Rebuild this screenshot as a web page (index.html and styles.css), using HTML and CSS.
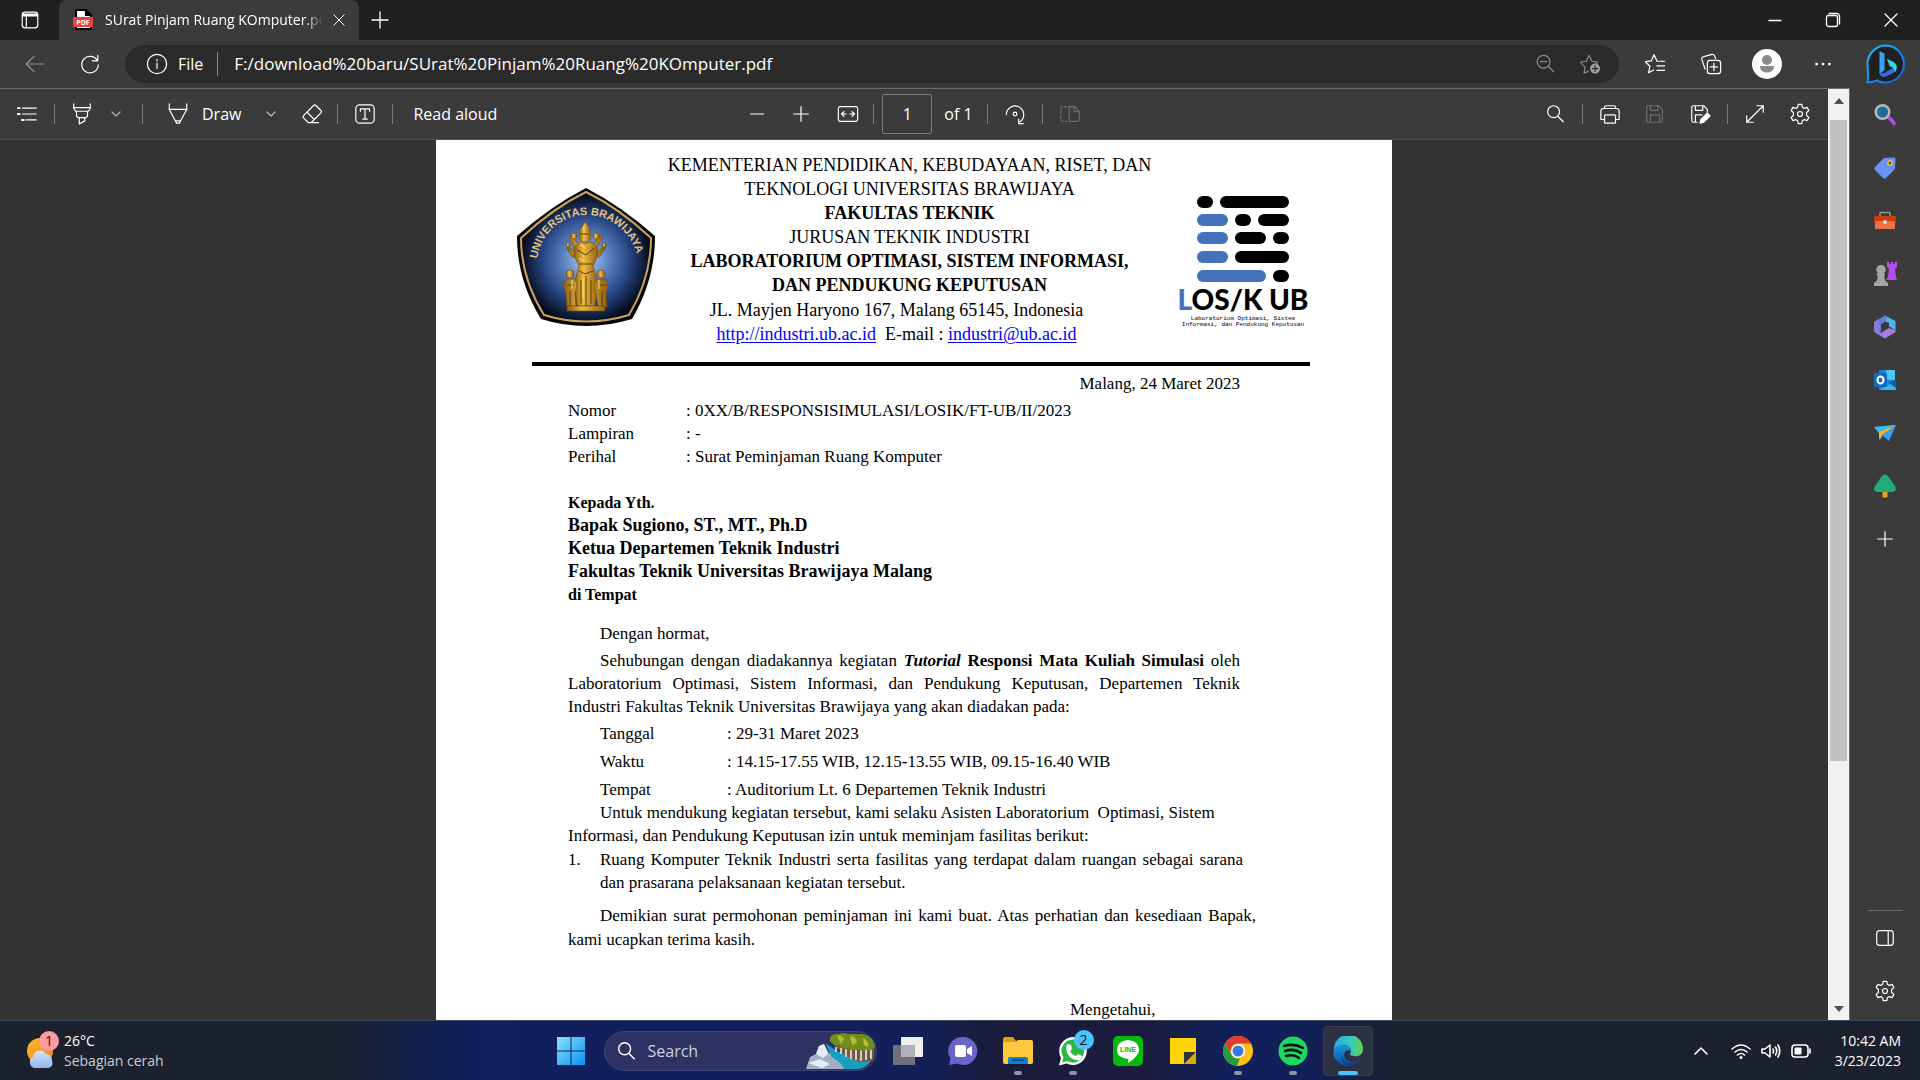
FILE: index.html
```html
<!DOCTYPE html>
<html lang="en">
<head>
<meta charset="utf-8">
<title>SUrat Pinjam Ruang KOmputer.pdf</title>
<link rel="stylesheet" href="styles.css">
</head>
<body>
<svg class="defs" aria-hidden="true">
  <symbol id="gear" viewBox="0 0 24 24"><path d="M10 1.500h4l.6 3.200 2 1.200 3.100-1.100 2 3.500-2.500 2.100v3.200l2.500 2.100-2 3.500-3.100-1.100-2 1.200-.6 3.200h-4l-.6-3.200-2-1.200-3.100 1.100-2-3.500 2.500-2.100v-3.200L2.300 8.300l2-3.500 3.100 1.100 2-1.200z"/><circle cx="12" cy="12" r="2.700"/></symbol>
  <symbol id="lens" viewBox="0 0 24 24"><circle cx="10.500" cy="9.500" r="6.500"/><path d="M15 14.500l6 6"/></symbol>
  <symbol id="chev" viewBox="0 0 12 12"><path d="M2 4l4 4 4-4"/></symbol>
  <symbol id="plus" viewBox="0 0 24 24"><path d="M12 4v16M4 12h16"/></symbol>
  <symbol id="cross" viewBox="0 0 24 24"><path d="M5 5l14 14M19 5L5 19"/></symbol>
  <symbol id="disk" viewBox="0 0 24 24"><path d="M4 3h12l4 4v12a2 2 0 0 1-2 2H5a2 2 0 0 1-2-2V5a2 2 0 0 1 1-2zM7 3v5h8V3M7 21v-8h10v8"/></symbol>
</svg>

<header class="tabs">
  <button class="tab-menu" aria-label="Tab actions"><svg class="icon" viewBox="0 0 24 24"><rect x="3.500" y="3.500" width="17" height="17" rx="3"/><path d="M4 5.500h16v2H4z" fill="#fff"/><path d="M8 8v12"/></svg></button>
  <div class="tab">
    <svg class="pdf" viewBox="0 0 20 22"><path d="M3 1h10l5 5v14H3z" fill="#fff" stroke="#000" stroke-width="2"/><path d="M12 0l7 7h-7z" fill="#000"/><rect x="0" y="8" width="20" height="10" rx="1" fill="#f0403c"/><text x="10" y="16" text-anchor="middle">PDF</text></svg>
    <span class="tab-title">SUrat Pinjam Ruang KOmputer.pdf</span>
    <button class="tab-close" aria-label="Close tab"><svg class="icon s18"><use href="#cross"/></svg></button>
  </div>
  <button class="new-tab" aria-label="New tab"><svg class="icon s24"><use href="#plus"/></svg></button>
  <div class="window-buttons">
    <button aria-label="Minimize"><svg class="icon s16" viewBox="0 0 16 16"><path d="M2 8.500h12"/></svg></button>
    <button aria-label="Restore"><svg class="icon s16" viewBox="0 0 16 16"><rect x="1.500" y="3.500" width="11" height="11" rx="2"/><path d="M4 1.500h8a3 3 0 0 1 2.500 2.500v8"/></svg></button>
    <button aria-label="Close"><svg class="icon s16" viewBox="0 0 16 16"><path d="M2 2l12 12M14 2L2 14"/></svg></button>
  </div>
</header>

<nav class="address-row">
  <button class="nav-button dim" aria-label="Back"><svg class="icon" viewBox="0 0 24 24"><path d="M22 12H2.500M11 3.500L2.500 12l8.500 8.500"/></svg></button>
  <button class="nav-button" aria-label="Refresh"><svg class="icon" viewBox="0 0 24 24"><path d="M20 8.500A9 9 0 1 0 21 13M20.500 2.500v6h-6"/></svg></button>
  <div class="address">
    <svg class="icon" viewBox="0 0 24 24"><circle cx="12" cy="12" r="10.500"/><path d="M12 11v6M12 7v1.500"/></svg>
    <label class="scheme" for="url">File</label>
    <input id="url" class="url" type="text" value="F:/download%20baru/SUrat%20Pinjam%20Ruang%20KOmputer.pdf">
    <button class="in-address dim" aria-label="Zoom"><svg class="icon" viewBox="0 0 24 24"><circle cx="10.500" cy="9.500" r="7"/><path d="M15.500 14.500l6 6M7 9.500h7"/></svg></button>
    <button class="in-address dim" aria-label="Add to favorites"><svg class="icon" viewBox="0 0 24 24"><path d="M10 20l-4.500 2 1-6.500L1.500 10l6.500-1L11 2.500 14 9l6.500 1-2 2"/><circle cx="17.500" cy="17" r="5.500" fill="#9c9c9c" stroke="none"/><path d="M17.500 14v6M14.500 17h6" stroke="#2b2b2b"/></svg></button>
  </div>
  <button class="side-button" aria-label="Favorites"><svg class="icon" viewBox="0 0 24 24"><path d="M14 8.500L11 2 8 8.500 1.500 9.500 6.500 14.500 5 21.500 10.500 18.500M14 9h8.500M14 14h8.500M14 19h8.500"/></svg></button>
  <button class="side-button" aria-label="Collections"><svg class="icon" viewBox="0 0 24 24"><rect x="8" y="8" width="14.500" height="14.500" rx="3"/><path d="M15.200 11v8M11 15.200h8M5.500 17.500L2 7a2.500 2.500 0 0 1 2-3l9-2.500a2.500 2.500 0 0 1 3 2L17 6"/></svg></button>
  <button class="side-button" aria-label="Profile"><svg class="avatar" viewBox="0 0 30 30"><circle cx="15" cy="15" r="15" fill="#fff"/><circle cx="15" cy="11" r="5" fill="#8a8a8a"/><path d="M8 17h14v1a7 5.500 0 0 1-14 0z" fill="#8a8a8a"/></svg></button>
  <button class="side-button" aria-label="Settings and more"><svg class="icon" viewBox="0 0 24 24"><g fill="#fff" stroke="none"><circle cx="5" cy="12" r="1.500"/><circle cx="12" cy="12" r="1.500"/><circle cx="19" cy="12" r="1.500"/></g></svg></button>
  <button class="bing" aria-label="Discover"><svg viewBox="0 0 40 40"><defs><linearGradient id="bg1" x2="1" y2="1"><stop stop-color="#19c5f0"/><stop offset="1" stop-color="#1b52e6"/></linearGradient></defs><path d="M20 1.500A18.500 18.500 0 1 1 11 36.500Q6 38.500 1.500 38.500 2.500 33 1.500 20A18.500 18.500 0 0 1 20 1.500z" fill="#202020" stroke="url(#bg1)" stroke-width="2"/><path d="M13.500 7l5 2.500V26L13.500 30z" fill="#3b9ff5"/><path d="M13.500 26q1 4 5 3l5-3 7-3.500q0 4-3.500 6.500L20 32.500q-5 1.500-6.500-3z" fill="#2f6df0"/><path d="M21 15l6 2.500q5 3 3.500 8-.5 2-2 3 1-4-5-6.500z" fill="#2cd8dd"/></svg></button>
</nav>

<main class="workspace">
  <section class="reader">
    <div class="reader-main">
      <div class="tools">
        <div class="tool-group">
          <button class="tool w54" aria-label="Contents"><svg class="icon" viewBox="0 0 24 24"><path d="M7 5.500h15M7 12h15M11 18.500h11"/><path d="M2 5.500h2M2 12h2M6.500 18.500h2" stroke-width="2"/></svg></button>
          <span class="sep"></span>
          <button class="tool highlight" aria-label="Highlight"><svg class="icon" viewBox="0 0 24 24"><path d="M3 1v5l2 3h14l2-3V1M3 5h18M6 9v5.500l2 1.500h8l2-1.500V9M9 16v7l6-3.500V16"/></svg></button>
          <button class="tool w32" aria-label="Highlight colors"><svg class="icon s12"><use href="#chev"/></svg></button>
          <span class="sep after-menu"></span>
          <button class="tool draw"><svg class="icon" viewBox="0 0 24 24"><path d="M2.500 1v6L10.500 22h3L21.500 7V1M2.500 7h19M9.500 19.500h5"/></svg>Draw</button>
          <button class="tool w32" aria-label="Draw options"><svg class="icon s12"><use href="#chev"/></svg></button>
          <button class="tool w50" aria-label="Erase"><svg class="icon" viewBox="0 0 24 24"><path d="M14 2.500a1.500 1.500 0 0 1 2 0l6 6a1.500 1.500 0 0 1 0 2L11 21.500H8L2.500 16a1.500 1.500 0 0 1 0-2zM6.500 10l8 8M11 21.500h8"/></svg></button>
          <span class="sep"></span>
          <button class="tool w54" aria-label="Add text"><svg class="icon" viewBox="0 0 24 24"><rect x="2" y="2" width="20" height="20" rx="4"/><path d="M7 9V6.500h10V9M12 6.500v11M9.500 17.500h5"/></svg></button>
          <span class="sep"></span>
          <button class="tool read">Read aloud</button>
        </div>
        <div class="tool-group center">
          <button class="tool w44" aria-label="Zoom out"><svg class="icon" viewBox="0 0 24 24"><path d="M5 12h14"/></svg></button>
          <button class="tool w44" aria-label="Zoom in"><svg class="icon"><use href="#plus"/></svg></button>
          <button class="tool w50" aria-label="Fit to width"><svg class="icon" viewBox="0 0 24 24"><rect x="1.500" y="4" width="21" height="16" rx="2"/><path d="M10 12H5M7.500 9.500L5 12l2.500 2.500M14 12h5M16.500 9.500L19 12l-2.500 2.500"/></svg></button>
          <span class="sep"></span>
          <input id="page" class="page-number" type="text" value="1">
          <label class="of" for="page">of 1</label>
          <span class="sep"></span>
          <button class="tool w54" aria-label="Rotate"><svg class="icon" viewBox="0 0 24 24"><circle cx="12" cy="12" r="2"/><path d="M2.500 12.500a9.500 9.500 0 1 1 15 8M21 22.500h-5v-5"/></svg></button>
          <span class="sep"></span>
          <button class="tool w54 faint" aria-label="Page view"><svg class="icon" viewBox="0 0 24 24"><path d="M11 4h6l5 5v9a2 2 0 0 1-2 2h-9zM16.500 4v5.500H22"/><path d="M8.500 4H4a2 2 0 0 0-2 2v12a2 2 0 0 0 2 2h4.500" stroke-dasharray="3 2"/></svg></button>
        </div>
        <div class="tool-group end">
          <button class="tool w54" aria-label="Find"><svg class="icon"><use href="#lens"/></svg></button>
          <span class="sep"></span>
          <button class="tool w54" aria-label="Print"><svg class="icon" viewBox="0 0 24 24"><path d="M6 6V4.500A1.500 1.500 0 0 1 7.500 3h9A1.500 1.500 0 0 1 18 4.500V6M6 18H2V9a3 3 0 0 1 3-3h14a3 3 0 0 1 3 3v9h-4"/><rect x="6" y="13" width="12" height="9" rx="1"/></svg></button>
          <button class="tool w36 faint" aria-label="Save"><svg class="icon"><use href="#disk"/></svg></button>
          <button class="tool w54" aria-label="Save as"><svg class="icon" viewBox="0 0 24 24"><path d="M9 21H5a2 2 0 0 1-2-2V5a2 2 0 0 1 2-2h11l4 4v3M7 3v5h8V3M7 21v-8h7"/><path d="M12 22l1-4 7-7 3 3-7 7z" fill="#fff"/></svg></button>
          <span class="sep"></span>
          <button class="tool w54" aria-label="Full screen"><svg class="icon" viewBox="0 0 24 24"><path d="M3 21L21 3M14 3h7v7M3 14v7h7"/></svg></button>
          <button class="tool w36" aria-label="Settings"><svg class="icon"><use href="#gear"/></svg></button>
        </div>
      </div>

      <div class="viewer">
        <article class="paper">
          <header class="letterhead">
            <svg class="seal" viewBox="0 0 138 138" role="img" aria-label="Universitas Brawijaya">
              <defs>
                <radialGradient id="sealBlue" cx=".5" cy=".52" r=".5"><stop stop-color="#b4cdf0"/><stop offset=".35" stop-color="#5b82c4"/><stop offset=".7" stop-color="#23407c"/><stop offset="1" stop-color="#050a18"/></radialGradient>
                <linearGradient id="gold" x2="1"><stop stop-color="#8a5e0e"/><stop offset=".4" stop-color="#eebc40"/><stop offset="1" stop-color="#8f5f10"/></linearGradient>
                <path id="arc" d="M20 71C30 12 108 12 122 73"/>
              </defs>
              <path d="M69 0Q104 18 138 48 138 92 115 131 69 145 24 131 0 92 0 48 34 18 69 0z" fill="#050505"/>
              <path d="M69 4Q102 20 134 50 134 90 112 127 69 140 27 127 4 90 4 50 36 20 69 4z" fill="url(#sealBlue)" stroke="#c9a35c" stroke-width="2"/>
              <text class="seal-text"><textPath href="#arc">UNIVERSITAS BRAWIJAYA</textPath></text>
              <g fill="url(#gold)" stroke="#6e480b" stroke-width=".6">
                <path d="M68 34l3 4 2 2-1 3 2 3-1 5-2 3h-6l-3-4 1-4-1-3 3-4z"/>
                <path d="M57 56q4-3 8-2l3 2 4-2q6 0 8 4l1 7-3 9-2 4 3 10 1 15-2 15H60l-2-15 1-14 3-11-5-10z"/>
                <path d="M57 59l-5-10 2-2 7 9zM80 59l6-10-2-2-7 9zM56 70l-6-9v-4l8 7zM81 70l7-9v-4l-8 7z"/>
                <circle cx="57" cy="48" r="3"/><circle cx="79" cy="48" r="3"/><circle cx="51" cy="57" r="2"/><circle cx="87" cy="57" r="2"/>
                <circle cx="53" cy="86" r="4"/><circle cx="84" cy="86" r="4"/>
                <path d="M49 91h9l2 7-2 7 1 14h-9l-1-14-3-7zM80 91h9l2 7-2 7 1 14h-9l-2-14-2-7z"/>
                <path d="M50 118h38v5H50z"/>
              </g>
              <g stroke="#5f3d08" fill="none"><path d="M60 62l9 5 8-7M62 76h15M62 83l6 3 8-3M69 88v30M64 92v24M74 92v24M63 46h9M50 97h7M82 97h7M53 103v15M85 103v15"/></g>
              <g stroke="#ffe083" fill="none"><path d="M67 38v5M63 57l5 3M62 70l5 3M66 90v20M55 92v9M82 92v9"/></g>
            </svg>
            <div class="heading">
              <p>KEMENTERIAN PENDIDIKAN, KEBUDAYAAN, RISET, DAN</p>
              <p>TEKNOLOGI UNIVERSITAS BRAWIJAYA</p>
              <p><b>FAKULTAS TEKNIK</b></p>
              <p>JURUSAN TEKNIK INDUSTRI</p>
              <p><b>LABORATORIUM OPTIMASI, SISTEM INFORMASI,</b></p>
              <p><b>DAN PENDUKUNG KEPUTUSAN</b></p>
              <div class="contact">
                <p>JL. Mayjen Haryono 167, Malang 65145, Indonesia</p>
                <p><a href="http://industri.ub.ac.id">http://industri.ub.ac.id</a>&nbsp; E-mail : <a href="mailto:industri@ub.ac.id">industri@ub.ac.id</a></p>
              </div>
            </div>
            <svg class="lab" viewBox="0 0 132 132" role="img" aria-label="LOSIK UB">
              <g fill="#000"><rect x="19" y="0" width="16" height="12" rx="6"/><rect x="42" y="0" width="69" height="12" rx="6"/><rect x="57" y="18" width="16" height="12" rx="6"/><rect x="80" y="18" width="31" height="12" rx="6"/><rect x="57" y="36" width="31" height="12" rx="6"/><rect x="95" y="36" width="16" height="12" rx="6"/><rect x="57" y="55" width="54" height="12" rx="6"/><rect x="95" y="74" width="16" height="12" rx="6"/></g>
              <g fill="#4472b8"><rect x="19" y="18" width="31" height="12" rx="6"/><rect x="19" y="36" width="31" height="12" rx="6"/><rect x="19" y="55" width="31" height="12" rx="6"/><rect x="19" y="74" width="69" height="12" rx="6"/></g>
              <text class="lab-name" x="65" y="114" text-anchor="middle"><tspan fill="#4472b8">L</tspan>OS/K UB</text>
              <text class="lab-sub" x="65" y="124" text-anchor="middle">Laboratorium Optimasi, Sistem</text>
              <text class="lab-sub" x="65" y="130" text-anchor="middle">Informasi, dan Pendukung Keputusan</text>
            </svg>
          </header>
          <div class="letter">
            <p class="date">Malang, 24 Maret 2023</p>
            <dl class="meta">
              <dt>Nomor</dt><dd>: 0XX/B/RESPONSISIMULASI/LOSIK/FT-UB/II/2023</dd>
              <dt>Lampiran</dt><dd>: -</dd>
              <dt>Perihal</dt><dd>: Surat Peminjaman Ruang Komputer</dd>
            </dl>
            <address class="recipient">
              <span class="small">Kepada Yth.</span>
              <span>Bapak Sugiono, ST., MT., Ph.D</span>
              <span>Ketua Departemen Teknik Industri</span>
              <span>Fakultas Teknik Universitas Brawijaya Malang</span>
              <span class="small">di Tempat</span>
            </address>
            <p class="indent greeting">Dengan hormat,</p>
            <p class="indent justified">Sehubungan dengan diadakannya kegiatan <b><i>Tutorial</i> Responsi Mata Kuliah Simulasi</b> oleh Laboratorium Optimasi, Sistem Informasi, dan Pendukung Keputusan, Departemen Teknik Industri Fakultas Teknik Universitas Brawijaya yang akan diadakan pada:</p>
            <dl class="schedule">
              <dt>Tanggal</dt><dd>: 29-31 Maret 2023</dd>
              <dt>Waktu</dt><dd>: 14.15-17.55 WIB, 12.15-13.55 WIB, 09.15-16.40 WIB</dd>
              <dt>Tempat</dt><dd>: Auditorium Lt. 6 Departemen Teknik Industri</dd>
            </dl>
            <p class="indent">Untuk mendukung kegiatan tersebut, kami selaku Asisten Laboratorium &nbsp;Optimasi, Sistem<br>Informasi, dan Pendukung Keputusan izin untuk meminjam fasilitas berikut:</p>
            <ol class="items"><li>Ruang Komputer Teknik Industri serta fasilitas yang terdapat dalam ruangan sebagai sarana dan prasarana pelaksanaan kegiatan tersebut.</li></ol>
            <p class="indent closing">Demikian surat permohonan peminjaman ini kami buat. Atas perhatian dan kesediaan Bapak, kami ucapkan terima kasih.</p>
            <p class="signature">Mengetahui,</p>
          </div>
        </article>
      </div>
    </div>
    <div class="scrollbar">
      <button class="scroll-arrow" aria-label="Scroll up"><svg viewBox="0 0 10 6"><path d="M0 6l5-6 5 6z" fill="#505050"/></svg></button>
      <div class="track"><div class="thumb"></div></div>
      <button class="scroll-arrow" aria-label="Scroll down"><svg viewBox="0 0 10 6"><path d="M0 0h10L5 6z" fill="#505050"/></svg></button>
    </div>
  </section>

  <aside class="sidebar">
    <button aria-label="Search"><svg class="app" viewBox="0 0 24 24"><path d="M14 15l3-2 5.500 6q1 3-2 3.500z" fill="#b944f2"/><circle cx="9.500" cy="9" r="6.800" fill="#1f6d96" stroke="#b9b9b9" stroke-width="2.500"/></svg></button>
    <button aria-label="Shopping"><svg class="app" viewBox="0 0 24 24"><path d="M12 2l9-.5q1.500 0 1.500 1.500L22 12q0 1-1 2l-8 8q-1.500 1.500-3 0l-8-8q-1.500-1.500 0-3l8-8q1-1 2-1z" fill="#6a92f8"/><circle cx="17" cy="7" r="2" fill="#333" stroke="#f2c311" stroke-width="1.500"/></svg></button>
    <button aria-label="Tools"><svg class="app" viewBox="0 0 24 24"><path d="M7 7V4.500Q7 3.500 8 3.500h8q1 0 1 1V7" fill="none" stroke="#999" stroke-width="1.500"/><rect x="1" y="7" width="22" height="7" rx="1" fill="#cf3c0c"/><rect x="2" y="12" width="20" height="8" rx="1" fill="#ee7047"/><circle cx="12" cy="13" r="2" fill="#ddd"/></svg></button>
    <button aria-label="Games"><svg class="app" viewBox="0 0 24 24"><path d="M14 0h2.500v2H18V0h2v2h1.500V0H24v5l-2 2 1 8 1 3H13l2-3 1-8-2-2z" fill="#b64bf2"/><path d="M8 3a4.500 4.500 0 0 1 3 8l1 1v1.500h-1l1 5 3 2.500v3H1v-3l3-2.500 1-5H3.500V12L5 11a4.500 4.500 0 0 1 3-8z" fill="#a5a5a5"/></svg></button>
    <button aria-label="Microsoft 365"><svg class="app" viewBox="0 0 24 24"><path d="M12 .5L22.500 6v9L16 11.500V8l-4-1.500z" fill="#4bb5ed"/><path d="M12 .5Q15 1 13 6L8 9v7l-4 3-3-3V7z" fill="#5f7ee0"/><path d="M1 7l5-3v11l2 3-3 1.500-4-3z" fill="#8b7bdb"/><path d="M7 18.500L16 13l6.500 2v2L12 23.500 5 19.500z" fill="#a97be0"/></svg></button>
    <button aria-label="Outlook"><svg class="app" viewBox="0 0 24 24"><path d="M6 2h16v20H6z" fill="#1683d0"/><path d="M13 2h9v10h-9z" fill="#4bc5f7"/><path d="M6 22l17-9v9z" fill="#35b8f1"/><path d="M16 15l7-4v9z" fill="#0b62a8"/><rect x="1" y="5" width="13" height="14" rx="1.500" fill="#0f6cbd"/><ellipse cx="7.500" cy="12" rx="3" ry="3.500" fill="none" stroke="#fff" stroke-width="2"/></svg></button>
    <button aria-label="Drop"><svg class="app" viewBox="0 0 24 24"><path d="M1 6l22-2-7 16-6-5-3 4-1-7z" fill="#3d9af5"/><path d="M1 6l22-2L6 12z" fill="#37bdec"/><path d="M23 4L6 11v8l3-5z" fill="#f4b41b"/></svg></button>
    <button aria-label="Browser essentials"><svg class="app" viewBox="0 0 24 24"><rect x="9.500" y="17" width="5" height="6.500" rx="1" fill="#eea320"/><path d="M9 2q3-3 6 0l7 10q3 6-4 6H6q-7 0-4-6z" fill="#22ad76"/></svg></button>
    <button aria-label="Customize"><svg class="icon"><use href="#plus"/></svg></button>
    <div class="side-bottom">
      <button aria-label="Hide sidebar"><svg class="icon" viewBox="0 0 24 24"><rect x="3" y="4" width="18" height="16" rx="3"/><path d="M15.500 4v16"/></svg></button>
      <button aria-label="Settings"><svg class="icon"><use href="#gear"/></svg></button>
    </div>
  </aside>
</main>

<footer class="taskbar">
  <button class="weather">
    <svg class="weather-icon" viewBox="0 0 36 40"><defs><linearGradient id="sun" x2="1" y2="1"><stop stop-color="#fbb928"/><stop offset="1" stop-color="#f08316"/></linearGradient><linearGradient id="cl" y2="1" x2="0"><stop stop-color="#d5e6fb"/><stop offset="1" stop-color="#93b4ea"/></linearGradient></defs><circle cx="14" cy="20" r="13" fill="url(#sun)"/><path d="M8 37a6 6 0 0 1-1-11 7 7 0 0 1 13-3 6 6 0 0 1 6 6q2 8-5 8z" fill="url(#cl)"/><circle cx="23" cy="10" r="10" fill="#ff99a4"/><text x="23" y="15" text-anchor="middle">1</text></svg>
    <span><span class="temp">26°C</span><br>Sebagian cerah</span>
  </button>
  <div class="dock">
    <button class="dock-item" aria-label="Start"><svg class="app30" viewBox="0 0 30 30"><defs><linearGradient id="win" x2="1" y2="1"><stop stop-color="#8be1fb"/><stop offset="1" stop-color="#0693f2"/></linearGradient></defs><path d="M1 1h13.500v13.500H1zM15.500 1H29v13.500H15.500zM1 15.500h13.500V29H1zM15.500 15.500H29V29H15.500z" fill="url(#win)"/></svg></button>
    <label class="search">
      <svg class="icon bold"><use href="#lens"/></svg>
      <input type="text" placeholder="Search" aria-label="Search">
      <svg class="scene" viewBox="0 0 70 36"><path d="M0 36l4-12 6-3 3-8 5-2 5 9 10 2 12 14z" fill="#9fb0c6"/><path d="M10 21l3-8 5-2 4 10-5 4zM2 30l12-4 10 5-8 4z" fill="#e4edf5"/><path d="M19 10q6 4 12 8l18 8 18-1q-5 9-14 11H38q-2-6-12-12z" fill="#16a0bb"/><path d="M26 10l16 4 27-2-2 16-14 1-15-7z" fill="#765a41"/><path d="M30 14v5M35 15v6M40 16v8M45 17v9M50 17v10M55 17v11M60 15v12M65 12v14" stroke="#eef6f7" stroke-width="1.500"/><path d="M24 8Q23 0 33 1q5-2 9 0h14q12 2 13 12-3 6-8 3-4 4-9 0-5 3-10-1-5 2-9-3-5 1-9-4z" fill="#718e1d"/><path d="M31 3q5-2 7 3l-3 5zM44 3q7 1 7 7l-5 2zM57 5q6 3 5 9l-4-2z" fill="#b4bd35"/></svg>
    </label>
    <button class="dock-item" aria-label="Task view"><svg class="app30" viewBox="0 0 30 30"><rect x="0" y="9" width="22" height="20" rx="1" fill="#70707a"/><rect x="8" y="1" width="22" height="20" rx="1" fill="#efefef"/><path d="M8 9h14v12H8z" fill="#b2b2b6"/></svg></button>
    <button class="dock-item" aria-label="Chat"><svg class="app30" viewBox="0 0 30 30"><path d="M15 1a14 14 0 1 1-6 26.500L1 29l1.500-6.500A14 14 0 0 1 15 1z" fill="#6965c8"/><rect x="7" y="9" width="11" height="12" rx="2" fill="#fff"/><path d="M19 13l5-3v10l-5-3z" fill="#fff"/></svg></button>
    <button class="dock-item open" aria-label="File Explorer"><svg class="app30" viewBox="0 0 30 30"><path d="M0 3q0-2 2-2h8l3 4v6H0z" fill="#dfa00b"/><path d="M0 8q0-2 2-2h10l3-2h13q2 0 2 2v20q0 2-2 2H2q-2 0-2-2z" fill="#ffc83d"/><path d="M5 28v-5q0-2 2-2h16q2 0 2 2v5z" fill="#1280cf"/><path d="M9 24h12" stroke="#0a4f91" stroke-width="2"/></svg></button>
    <button class="dock-item open" aria-label="WhatsApp"><svg class="app30" viewBox="0 0 30 30"><path d="M15 1a14 14 0 1 1-6.500 26.500L1 29.500l2-7.500A14 14 0 0 1 15 1z" fill="#fff"/><path d="M15 3.500a11.500 11.500 0 1 1-6 21.500l-5 1.500L5.500 21.500A11.500 11.500 0 0 1 15 3.500z" fill="#2cb742"/><path d="M10 8l3 1 1 4-2 2q2 4 6 5l2-2 4 2q0 4-4 4.500Q9 23 8 12q0-3 2-4z" fill="#fff"/></svg><span class="badge">2</span></button>
    <button class="dock-item" aria-label="LINE"><svg class="app30" viewBox="0 0 30 30"><rect width="30" height="30" rx="5" fill="#06b90a"/><path d="M15 4q11 1 11 10 0 6-11 13l.5-4Q4 22 4 14 4 5 15 4z" fill="#fff"/><text class="line-text" x="15" y="16" text-anchor="middle">LINE</text></svg></button>
    <button class="dock-item" aria-label="Sticky Notes"><svg class="app30" viewBox="0 0 30 30"><path d="M2 2h26v14L16 28H2z" fill="#ffd50a"/><path d="M28 16L16 28V16z" fill="#333"/><path d="M28 16v12H16z" fill="#dca90b"/></svg></button>
    <button class="dock-item open" aria-label="Chrome"><svg class="app30" viewBox="0 0 30 30"><circle cx="15" cy="15" r="15" fill="#fbc116"/><path d="M2 7.500a15 15 0 0 1 26 0H15a7.500 7.500 0 0 0-7 10z" fill="#e33b2e"/><path d="M2 7.500l6.500 11.300a7.500 7.500 0 0 0 8.500 3.500L14 30A15 15 0 0 1 2 7.500z" fill="#249a41"/><circle cx="15" cy="15" r="7" fill="#fff"/><circle cx="15" cy="15" r="5.500" fill="#3c78e8"/></svg></button>
    <button class="dock-item open" aria-label="Spotify"><svg class="app30" viewBox="0 0 30 30"><circle cx="15" cy="15" r="14.500" fill="#1ed760"/><path d="M6 10q10-3 19 2M7 15q9-3 16 2M8 20q8-2 13 2" fill="none" stroke="#111" stroke-width="2.500" stroke-linecap="round"/></svg></button>
    <button class="dock-item active" aria-label="Microsoft Edge"><svg class="app30" viewBox="0 0 30 30"><defs><linearGradient id="e1" x2="1" y2="0"><stop stop-color="#2ba9e0"/><stop offset=".5" stop-color="#34c7c8"/><stop offset="1" stop-color="#61d35a"/></linearGradient><linearGradient id="e2" x2="0" y2="1"><stop stop-color="#1d97dc"/><stop offset="1" stop-color="#0d4f9c"/></linearGradient></defs><path d="M1 13A14.500 14.500 0 0 1 30 13c0 6-5 8-9 7-4 0-5-1-3-4 1-5-5-8-9-7-4 1-7 3-8 7z" fill="url(#e1)"/><path d="M.5 16C1 10 7 8 11 9c6 1 8 4 7 7l-2-2c-4 0-6 4-4 8 3 5 10 5 16 1-6 8-16 9-22 4Q0 22 .5 16z" fill="url(#e2)"/><path d="M11 14q-4 6 0 11 6 5 17-2l-1 2q-7 6-14 4-8-6-2-15z" fill="#0b3f86"/></svg></button>
  </div>
  <div class="tray">
    <button class="tray-up" aria-label="Show hidden icons"><svg class="icon s16 bold" viewBox="0 0 16 16"><path d="M2 11l6-6 6 6"/></svg></button>
    <button class="tray-status" aria-label="Network, volume and battery">
      <svg class="icon s20 bold" viewBox="0 0 20 20"><path d="M1 8q9-8 18 0M4 11q6-5 12 0M6.500 14q3.500-3 7 0"/><circle cx="10" cy="16.500" r="1.500" fill="#fff" stroke="none"/></svg>
      <svg class="icon s20 bold" viewBox="0 0 20 20"><path d="M1 8h3l5-4v12l-5-4H1zM12 8q1 2 0 4M14.500 6q2.500 4 0 8M17 4q3.500 6 0 12"/></svg>
      <svg class="icon s20 bold" viewBox="0 0 20 20"><rect x="1" y="4" width="16" height="12" rx="3"/><path d="M19 8v4"/><rect x="3.500" y="6.500" width="7" height="7" rx="1" fill="#fff" stroke="none"/></svg>
    </button>
    <button class="clock">10:42 AM<br>3/23/2023</button>
  </div>
</footer>
</body>
</html>
```
FILE: styles.css
```css
* { box-sizing: border-box; }
body {
  margin: 0;
  height: 100vh;
  display: flex;
  flex-direction: column;
  overflow: hidden;
  background: #3b3b3b;
  color: #fff;
  font: 16px/24px "Open Sans", "Noto Sans", sans-serif;
}
button, input {
  margin: 0;
  padding: 0;
  border: 0;
  background: none;
  color: inherit;
  font: inherit;
}
button {
  display: inline-flex;
  align-items: center;
  justify-content: center;
  flex: none;
}
p, dl, dd, ol { margin: 0; padding: 0; }
.defs { position: absolute; width: 0; height: 0; }
.icon {
  width: 22px;
  height: 22px;
  flex: none;
  fill: none;
  stroke: #fff;
  stroke-width: 1.3;
  stroke-linecap: round;
  stroke-linejoin: round;
}
.s12 { width: 12px; height: 12px; }
.s16 { width: 16px; height: 16px; }
.s18 { width: 18px; height: 18px; }
.s20 { width: 20px; height: 20px; }
.s24 { width: 24px; height: 24px; }
.bold { stroke-width: 1.6; }
.dim .icon { stroke: #8c8c8c; }
.faint .icon { stroke: #6e6e6e; }

/* Tab strip */
.tabs { display: flex; height: 40px; flex: none; background: #202020; }
.tab-menu { width: 59px; }
.tab {
  display: flex;
  align-items: center;
  width: 300px;
  padding: 0 10px 0 14px;
  background: #3b3b3b;
  border-radius: 8px 8px 0 0;
}
.pdf { width: 20px; height: 22px; flex: none; }
.pdf text { font: bold 7px "Open Sans", sans-serif; fill: #fff; }
.tab-title {
  flex: 1;
  min-width: 0;
  margin-left: 12px;
  overflow: hidden;
  white-space: nowrap;
  font-size: 14px;
  mask-image: linear-gradient(90deg, #000 92%, transparent);
}
.tab-close { width: 20px; height: 24px; margin-left: 6px; }
.new-tab { width: 42px; }
.window-buttons { display: flex; margin-left: auto; }
.window-buttons button { width: 58px; }

/* Address row */
.address-row { display: flex; align-items: center; height: 48px; flex: none; }
.nav-button { width: 55px; margin-left: 7px; }
.nav-button + .nav-button { margin-left: 0; }
.address {
  display: flex;
  align-items: center;
  flex: 1;
  height: 38px;
  margin: 0 8px;
  padding: 0 7px 0 21px;
  border-radius: 19px;
  background: #2b2b2b;
}
.scheme { margin-left: 10px; padding-right: 14px; border-right: 1px solid #8a8a8a; }
.url { flex: 1; min-width: 0; margin-left: 16px; font-size: 17px; outline: 0; }
.in-address { width: 45px; }
.side-button { width: 56px; }
.avatar { width: 30px; height: 30px; }
.bing { width: 69px; }
.bing svg { width: 40px; height: 40px; }

/* PDF reader */
.workspace { display: flex; flex: 1; min-height: 0; }
.reader { display: flex; flex: 1; min-width: 0; border-top: 1px solid #6c6c6c; border-right: 1px solid #6c6c6c; }
.reader-main { display: flex; flex-direction: column; flex: 1; min-width: 0; }
.tools {
  display: grid;
  grid-template-columns: 1fr auto 1fr;
  align-items: center;
  height: 51px;
  flex: none;
  border-bottom: 1px solid #505050;
}
.tool-group { display: flex; align-items: center; }
.center { padding-left: 4px; }
.end { justify-content: flex-end; padding-right: 10px; }
.tool { height: 40px; }
.w32 { width: 32px; }
.w32 .icon { stroke: #b5b5b5; }
.w36 { width: 36px; }
.w44 { width: 44px; }
.w50 { width: 50px; }
.w54 { width: 54px; }
.highlight { width: 45px; padding-left: 9px; }
.draw { gap: 13px; padding: 0 14px 0 24px; }
.read { padding: 0 20px; }
.sep { width: 1px; height: 20px; background: #7a7a7a; }
.after-menu { margin-left: 10px; }
.page-number {
  width: 50px;
  height: 40px;
  margin-left: 8px;
  border: 1px solid #7f7f7f;
  border-radius: 2px;
  text-align: center;
}
.of { margin: 0 14px 0 12px; }
.viewer { flex: 1; min-height: 0; overflow: hidden; background: #333; }

/* Scrollbar */
.scrollbar { display: flex; flex-direction: column; width: 21px; flex: none; padding: 0 2px; background: #f1f1f1; }
.scroll-arrow { height: 22px; }
.scroll-arrow:first-child { height: 31px; padding-bottom: 8px; }
.scroll-arrow svg { width: 10px; height: 6px; }
.track { flex: 1; }
.thumb { height: 73%; background: #c1c1c1; }

/* Sidebar */
.sidebar { display: flex; flex-direction: column; align-items: center; width: 70px; flex: none; }
.sidebar button { width: 53px; height: 53px; }
.app { width: 24px; height: 24px; }
.side-bottom { display: flex; flex-direction: column; align-items: center; margin-top: auto; padding-bottom: 3px; }
.side-bottom::before { content: ""; width: 35px; height: 1px; background: #6a6a6a; }

/* Letter */
.paper {
  width: 100%;
  max-width: 956px;
  min-height: 1352px;
  margin: 0 auto;
  background: #fff;
  color: #000;
  font: 17px/23px "Liberation Serif", "Times New Roman", serif;
}
.letterhead {
  display: flex;
  margin: 0 82px 0 96px;
  padding: 13px 0 15px;
  border-bottom: 4px solid #000;
  font-size: 18px;
  line-height: 24px;
}
.heading { flex: 1; padding: 0 14px 0 0; text-align: center; white-space: nowrap; }
.heading a { color: #00f; text-underline-offset: 2px; }
.contact { padding: 1px 26px 1px 0; }
.seal { width: 138px; height: 138px; flex: none; margin: 35px 0 0 -15px; }
.seal-text { font: bold 11px "Liberation Sans", Arial, sans-serif; fill: #e2c27a; }
.lab { width: 132px; height: 132px; flex: none; margin-top: 43px; }
.lab-name { font: 900 28px Lato, sans-serif; }
.lab-sub { font: 6px "Liberation Mono", monospace; }
.letter { padding: 6px 152px 0 132px; }
.date { text-align: right; }
.meta, .schedule { display: grid; }
.meta { grid-template-columns: 118px 1fr; margin-top: 4px; }
.recipient { display: flex; flex-direction: column; margin-top: 23px; font-size: 18px; font-style: normal; font-weight: bold; }
.small { font-size: 16px; }
.indent { text-indent: 32px; }
.greeting { margin: 16px 0 4px; }
.justified { text-align: justify; }
.schedule { grid-template-columns: 127px 1fr; row-gap: 5px; margin: 4px 0 0; padding-left: 32px; }
.items { margin: 1px -3px 0 0; padding-left: 32px; list-style: none; counter-reset: item; text-align: justify; }
.items li { text-indent: -32px; }
.items li::before { counter-increment: item; content: counter(item) "."; display: inline-block; width: 32px; text-indent: 0; text-align: left; }
.closing { margin: 10px -16px 0 0; line-height: 24px; text-align: justify; }
.signature { margin-top: 46px; padding-left: 502px; }

/* Taskbar */
.taskbar {
  display: grid;
  grid-template-columns: 1fr auto 1fr;
  align-items: center;
  height: 60px;
  flex: none;
  border-top: 1px solid #3c4656;
  background: linear-gradient(90deg, #1c222d 0, #1c222d 17%, #10215a 24%, #121e60 38%, #141f58 48%, #1b1c3b 52%, #1b1c40 60%, #10205c 64%, #121f58 68%, #1b212d 73%, #1c222d 100%);
}
.weather { justify-self: start; gap: 2px; padding-left: 26px; font-size: 14px; line-height: 20px; color: #c8cdd4; text-align: left; }
.temp { color: #fff; }
.weather-icon { width: 36px; height: 40px; }
.weather-icon text { font: 14px "Open Sans", sans-serif; fill: #222; }
.dock { display: flex; align-items: center; gap: 5px; margin-right: 2px; }
.dock-item { position: relative; width: 50px; height: 50px; border-radius: 5px; }
.app30 { width: 30px; height: 30px; }
.open::after, .active::after {
  content: "";
  position: absolute;
  bottom: 1px;
  left: 21px;
  width: 8px;
  height: 4px;
  border-radius: 2px;
  background: #8f94a3;
}
.active { background: #2d3242; box-shadow: inset 0 0 0 1px #3a4050; }
.active::after { left: 15px; width: 20px; background: #4cc2ff; }
.badge {
  position: absolute;
  top: 4px;
  right: 4px;
  width: 20px;
  height: 20px;
  border-radius: 50%;
  background: #4cc2ff;
  color: #111;
  font-size: 14px;
  line-height: 20px;
}
.search {
  display: flex;
  align-items: center;
  width: 273px;
  height: 40px;
  margin: 0 1px 0 3px;
  padding-left: 10px;
  border: 1px solid #3b4375;
  border-radius: 20px;
  background: #2d3263;
  overflow: hidden;
}
.search input { flex: 1; min-width: 0; margin-left: 11px; outline: 0; font-size: 16px; }
.search input::placeholder { color: #ccd0e0; opacity: 1; }
.scene { width: 70px; height: 36px; flex: none; }
.line-text { font: bold 7px "Liberation Sans", Arial, sans-serif; fill: #06b90a; }
.tray { display: flex; align-items: center; justify-content: flex-end; padding-right: 19px; font-size: 14px; line-height: 20px; }
.tray-up { width: 40px; height: 40px; }
.tray-status { gap: 10px; margin: 0 24px 0 10px; }
.clock { text-align: right; }
```
